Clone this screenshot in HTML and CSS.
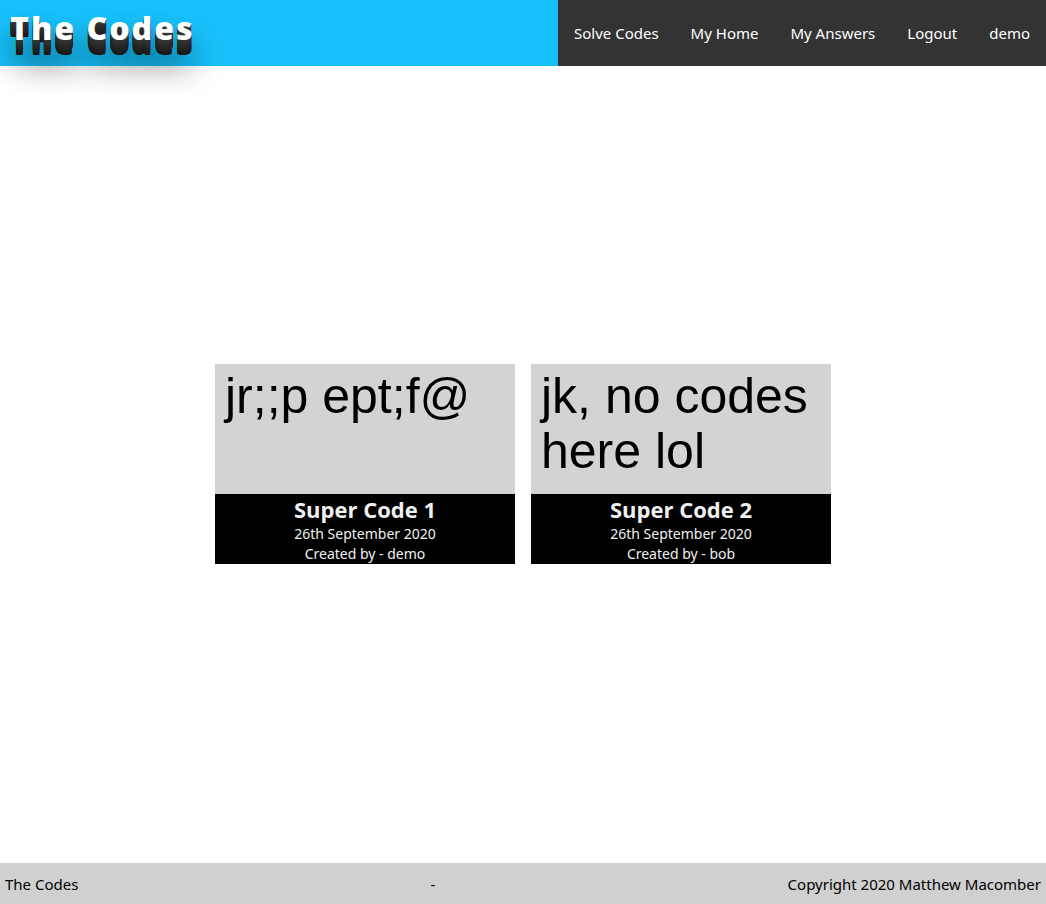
FILE: index.html
```html
<!DOCTYPE html>
<html lang="en">
<head>
  <meta charset="utf-8">
  <meta name="viewport" content="width=device-width, initial-scale=1">
  <title>The Codes</title>
  <link rel="stylesheet" href="styles.css">
</head>
<body>
  <header class="header">
    <h1 class="brand">The Codes</h1>
    <nav class="nav">
      <a class="nav-link" href="#solve">Solve Codes</a>
      <a class="nav-link" href="#home">My Home</a>
      <a class="nav-link" href="#answers">My Answers</a>
      <a class="nav-link" href="#logout">Logout</a>
      <a class="nav-link" href="#profile">demo</a>
    </nav>
  </header>
  <main class="codes">
    <article class="card">
      <p class="card-code">jr;;p ept;f@</p>
      <div class="card-info">
        <h2 class="card-title">Super Code 1</h2>
        <p class="card-meta">26th September 2020</p>
        <p class="card-meta">Created by - demo</p>
      </div>
    </article>
    <article class="card">
      <p class="card-code">jk, no codes here lol</p>
      <div class="card-info">
        <h2 class="card-title">Super Code 2</h2>
        <p class="card-meta">26th September 2020</p>
        <p class="card-meta">Created by - bob</p>
      </div>
    </article>
  </main>
  <footer class="footer">
    <span>The Codes</span>
    <span>-</span>
    <span>Copyright 2020 Matthew Macomber</span>
  </footer>
</body>
</html>
```
FILE: styles.css
```css
* {
  box-sizing: border-box;
  margin: 0;
  padding: 0;
}

body {
  display: flex;
  flex-direction: column;
  min-height: 100vh;
  background: #fff;
  color: #000;
  font-family: "Segoe UI", "Noto Sans", sans-serif;
  font-size: 15px;
  line-height: 21px;
}

.header {
  display: flex;
  justify-content: space-between;
  background: #18c1fb;
}

.brand {
  padding: 4px 10px 14px;
  color: #fff;
  font-family: "Segoe UI", "Open Sans", sans-serif;
  font-size: 32px;
  font-weight: 800;
  line-height: 48px;
  letter-spacing: 2px;
  text-shadow:
    0 1px 0 #333,
    0 2px 0 #323232,
    0 3px 0 #303030,
    0 4px 0 #2e2e2e,
    0 5px 0 #2c2c2c,
    0 6px 0 #2a2a2a,
    0 7px 0 #282828,
    0 8px 0 #262626,
    0 9px 0 #242424,
    0 10px 0 #222,
    0 11px 0 #202020,
    0 12px 0 #1e1e1e,
    0 13px 0 #1c1c1c,
    0 14px 0 #1a1a1a,
    0 15px 0 #111,
    0 24px 30px rgba(0, 0, 0, 0.9);
}

.nav {
  display: flex;
  background: #333;
}

.nav-link {
  display: flex;
  align-items: center;
  padding: 0 16px;
  color: #fff;
  text-decoration: none;
}

.codes {
  display: flex;
  flex: 1;
  flex-wrap: wrap;
  align-content: center;
  justify-content: center;
  gap: 16px;
  padding-bottom: 1px;
}

.card {
  display: flex;
  flex-direction: column;
  width: 300px;
  min-height: 200px;
  background: #d3d3d3;
}

.card-code {
  flex: 1;
  padding: 5px 10px;
  font-family: Arial, "Liberation Sans", sans-serif;
  font-size: 50px;
  line-height: 55px;
}

.card-info {
  background: #000;
  color: #f0f0f0;
  text-align: center;
}

.card-title {
  font-family: "Segoe UI", "Open Sans", sans-serif;
  font-size: 22px;
  font-weight: 700;
  line-height: 30px;
}

.card-meta {
  font-size: 14px;
  line-height: 20px;
}

.footer {
  display: flex;
  justify-content: space-between;
  padding: 11px 5px 9px;
  background: #d0d0d0;
}
```
